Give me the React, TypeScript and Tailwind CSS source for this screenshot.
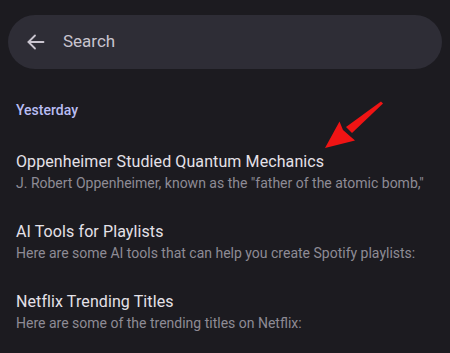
import React from "react";

const items = [
  {
    title: "Oppenheimer Studied Quantum Mechanics",
    text: 'J. Robert Oppenheimer, known as the "father of the atomic bomb,"',
  },
  {
    title: "AI Tools for Playlists",
    text: "Here are some AI tools that can help you create Spotify playlists:",
  },
  {
    title: "Netflix Trending Titles",
    text: "Here are some of the trending titles on Netflix:",
  },
];

export default function App() {
  return (
    <div
      className="relative h-[353px] w-[450px] overflow-hidden bg-[#1c1b20] px-2 pt-[15px]"
      style={{ fontFamily: "Roboto, 'Noto Sans', sans-serif" }}
    >
      {/* Search bar */}
      <div className="flex h-[54px] items-center rounded-full bg-[#2e2d36]">
        <svg
          width="18"
          height="16"
          viewBox="0 0 18 16"
          className="ml-[19px] shrink-0"
          fill="none"
          stroke="#cac5d0"
          strokeWidth="1.8"
          strokeLinecap="round"
          strokeLinejoin="round"
        >
          <path d="M1.5 8H16.5" />
          <path d="M8 1.5L1.5 8L8 14.5" />
        </svg>
        <span className="ml-[18px] text-[17px] text-[#c8c4cf]">Search</span>
      </div>

      {/* History */}
      <div className="px-2">
        <div className="mt-[31px] text-[14px] leading-5 font-medium text-[#b9bdf2]">
          Yesterday
        </div>
        <div className="mt-[30px] flex flex-col gap-[27px]">
          {items.map((item, i) => (
            <div key={i}>
              <div className="text-[16px] leading-6 tracking-[0.1px] text-[#e5e1e8]">{item.title}</div>
              <div className="-mt-px text-[14px] leading-5 text-[#8e8b95]">{item.text}</div>
            </div>
          ))}
        </div>
      </div>

      {/* Annotation arrow */}
      <svg className="pointer-events-none absolute left-0 top-0" width="450" height="353">
        <path d="M381 101.5 L383 103.5 L352 133 L346 127 Z" fill="#f01414" />
        <path d="M325 148 L339.5 121.5 L343 130 L355 140.5 Z" fill="#f01414" />
      </svg>
    </div>
  );
}
